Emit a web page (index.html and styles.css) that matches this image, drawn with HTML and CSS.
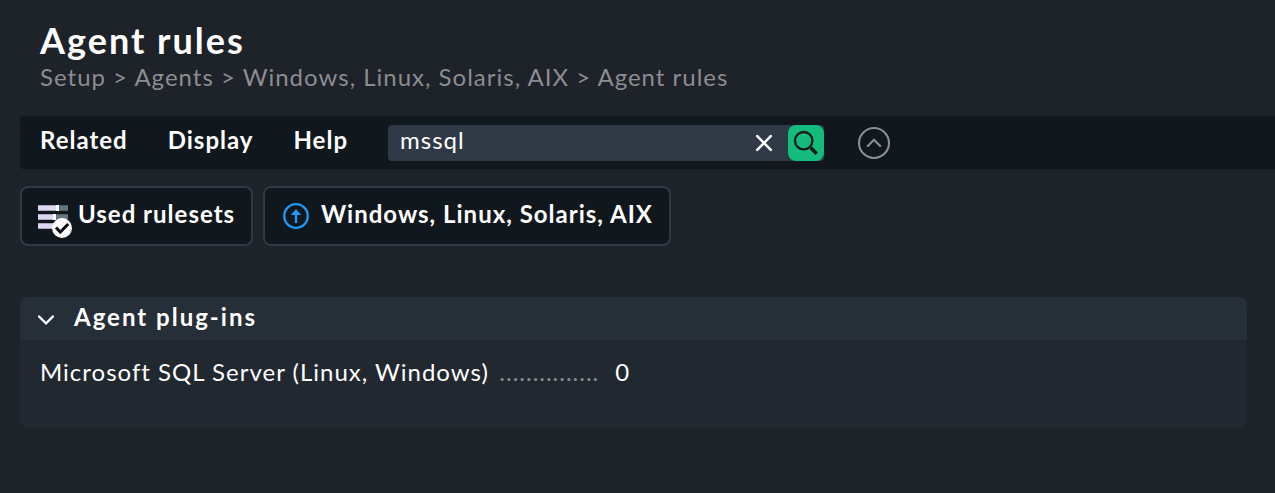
FILE: index.html
```html
<!DOCTYPE html>
<html lang="en">
<head>
<meta charset="utf-8">
<title>Agent rules</title>
<link rel="stylesheet" href="styles.css">
</head>
<body>
<header class="titlebar">
  <h1 class="title">Agent rules</h1>
  <nav class="breadcrumb">Setup &gt; Agents &gt; Windows, Linux, Solaris, AIX &gt; Agent rules</nav>
</header>
<div class="menubar">
  <div class="menus">
    <span class="menu">Related</span>
    <span class="menu">Display</span>
    <span class="menu">Help</span>
  </div>
  <div class="search">
    <span class="query">mssql</span>
    <svg class="clear" width="18" height="18" viewBox="0 0 18 18"><path d="M2.2 2.2 15.8 15.8M15.8 2.2 2.2 15.8" fill="none" stroke="#fff" stroke-width="2.5" stroke-linecap="round"/></svg>
    <span class="go">
      <svg width="36" height="36" viewBox="0 0 36 36" fill="none" stroke="#11181d"><circle cx="15.7" cy="15.7" r="8.7" stroke-width="2.3"/><path d="M21.5 21.5 23.5 23.5" stroke-width="2"/><path d="M23 23 28.7 28.7" stroke-width="3.6"/></svg>
    </span>
  </div>
  <svg class="collapse" width="32" height="32" viewBox="0 0 32 32" fill="none" stroke="#8c8d8e"><circle cx="16" cy="16" r="15" stroke-width="2.1"/><path d="M9.8 19 16 12.8 22.2 19" stroke-width="2.2" stroke-linecap="round"/></svg>
</div>
<div class="shortcuts">
  <a class="shortcut rulesets">
    <svg width="36" height="36" viewBox="0 0 36 36">
      <path d="M1 8.2h18v5.6H1zM1 17.2h15v5.6H1zM1 26.2h16v5.6H1z" fill="#ded7f2"/>
      <path d="M22 8.2h9v5.6h-9zM19 17.2h12v5.6H19z" fill="#657680"/>
      <path d="M19 8h3v6h-3zM16 17h3v6h-3z" fill="#fff"/>
      <circle cx="25" cy="31" r="10" fill="#fff"/>
      <path d="M19 30.5 23.3 35 31.2 27" fill="none" stroke="#080b0d" stroke-width="3"/>
    </svg>
    <span>Used rulesets</span>
  </a>
  <a class="shortcut parent">
    <svg width="26" height="26" viewBox="0 0 26 26"><circle cx="13" cy="13" r="11.8" fill="none" stroke="#2196f3" stroke-width="2.3"/><path d="M13 6 18.2 12H14.2V20H11.8V12H7.8z" fill="#2196f3"/></svg>
    <span>Windows, Linux, Solaris, AIX</span>
  </a>
</div>
<section class="panel">
  <h2 class="panel-head">
    <svg width="18" height="12" viewBox="0 0 18 12"><path d="M2 2.4 9 9.4 16 2.4" fill="none" stroke="#fff" stroke-width="2.2" stroke-linecap="round"/></svg>
    <span>Agent plug-ins</span>
  </h2>
  <div class="rule">
    <span>Microsoft SQL Server (Linux, Windows)</span>
    <span class="dots">...............</span>
    <span>0</span>
  </div>
</section>
</body>
</html>
```
FILE: styles.css
```css
* { box-sizing: border-box; }
body {
  margin: 0;
  height: 493px;
  overflow: hidden;
  background: #1e2229;
  color: #fff;
  font: 24px/30px Lato, sans-serif;
  letter-spacing: 1px;
  white-space: nowrap;
}
svg { display: block; flex: none; overflow: visible; }
.titlebar { height: 116px; padding: 18px 0 0 40px; }
.title { margin: 0; font-size: 36px; line-height: 44px; font-weight: 700; letter-spacing: 2px; }
.breadcrumb { color: #8c8d8f; }
.menubar {
  display: flex;
  height: 53px;
  margin-left: 20px;
  padding: 9px 0 0 20px;
  background: #11181d;
  border-radius: 4px 0 0 4px;
}
.menus { display: flex; gap: 40px; width: 348px; font-weight: 700; }
.search {
  display: flex;
  width: 436px;
  height: 36px;
  padding-left: 12px;
  background: #303946;
  border-radius: 4px;
}
.query { flex: 1; }
.clear { margin: 9px 15px 0 0; }
.go { width: 36px; height: 36px; background: #13bb7c; border-radius: 8px; }
.collapse { margin: 2px 0 0 34px; }
.shortcuts { display: flex; gap: 10px; padding: 17px 0 0 20px; }
.shortcut {
  display: flex;
  height: 60px;
  background: #11181d;
  border: 2px solid #303946;
  border-radius: 8px;
  font-weight: 700;
}
.shortcut span { margin-top: 11px; }
.rulesets { width: 233px; padding-left: 15px; }
.rulesets svg { margin: 9px 5px 0 0; }
.parent { width: 408px; padding-left: 18px; }
.parent svg { margin: 15px 12px 0 0; }
.panel {
  width: 1227px;
  height: 131px;
  margin: 51px 0 0 20px;
  background: #22282f;
  border-radius: 8px;
  overflow: hidden;
}
.panel-head {
  display: flex;
  height: 43px;
  margin: 0;
  padding: 5px 0 0 17px;
  background: #262e37;
  font-size: 24px;
  font-weight: 700;
  letter-spacing: 2px;
}
.panel-head svg { margin: 12px 19px 0 0; }
.rule { display: flex; padding: 17px 0 0 20px; }
.dots { width: 126.5px; padding-left: 10.5px; color: #8c8d8f; }
```
